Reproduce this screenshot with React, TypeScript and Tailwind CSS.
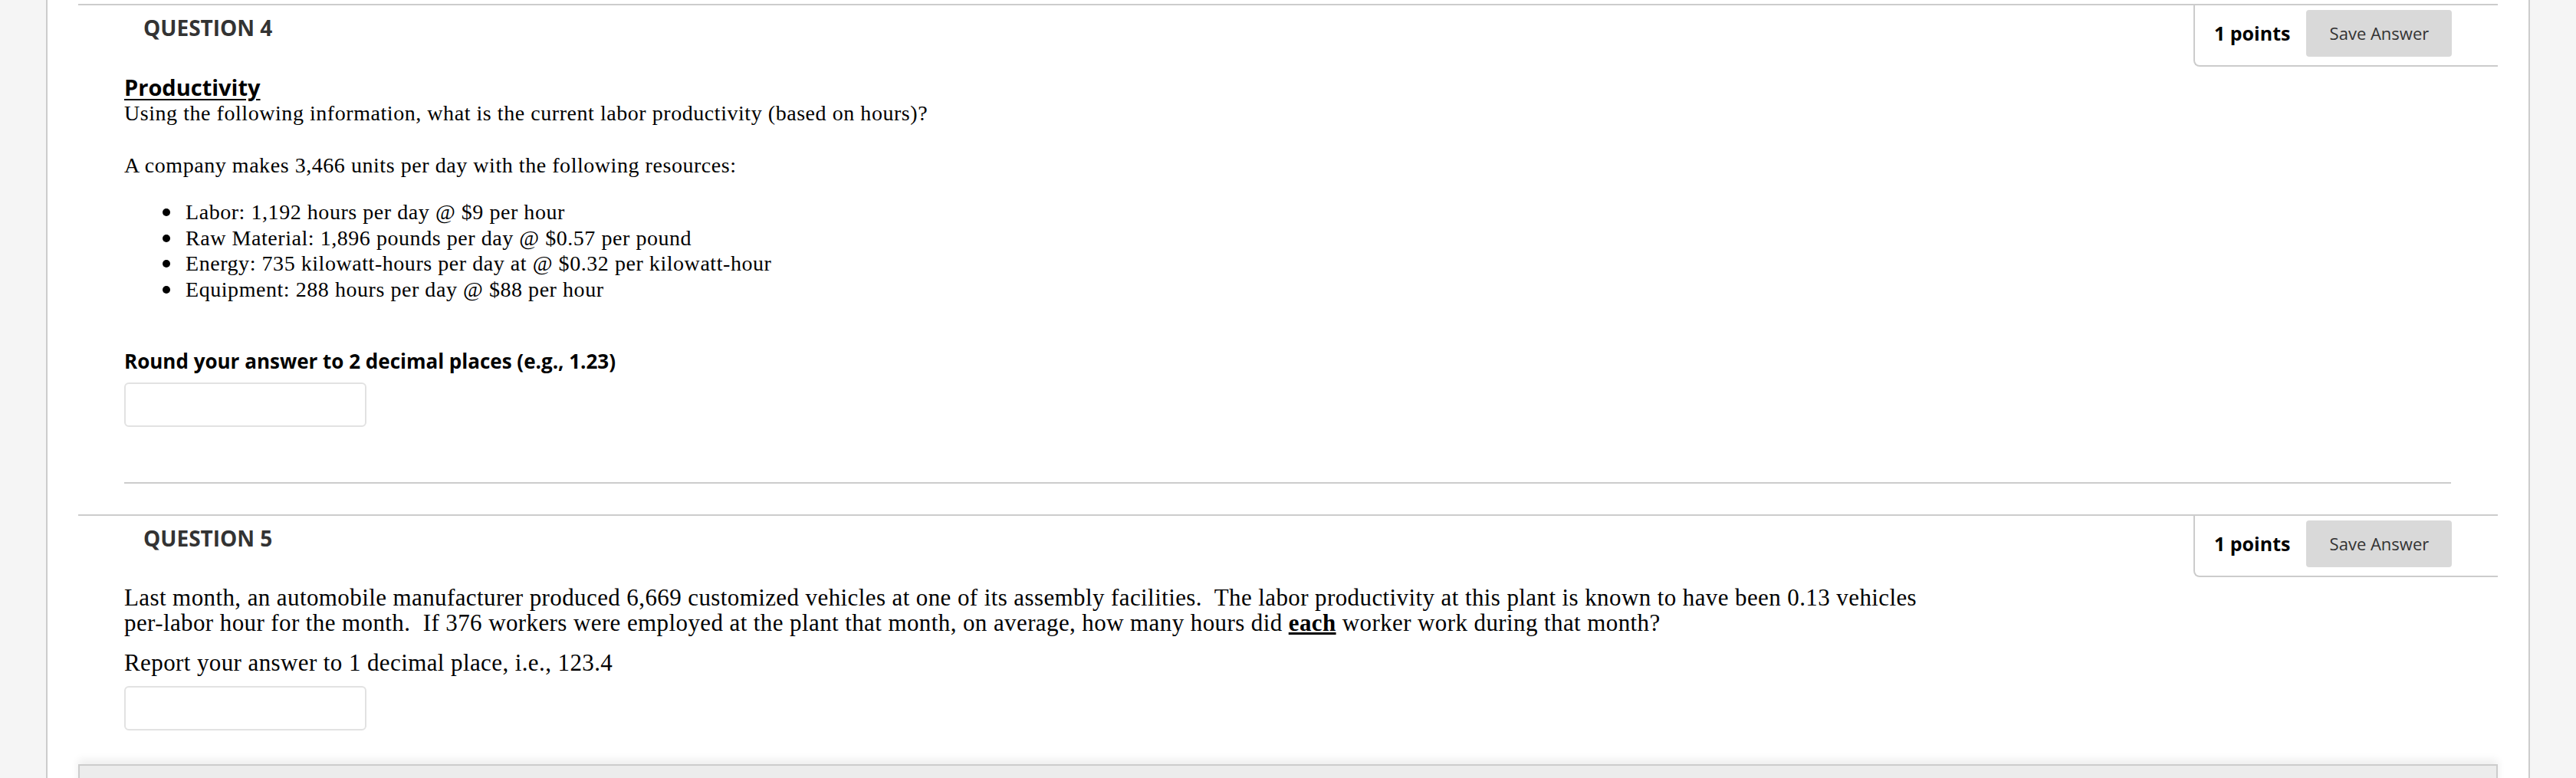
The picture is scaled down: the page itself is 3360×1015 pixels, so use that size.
import React from "react";

function QuestionHeader({ n }: { n: number }) {
  return (
    <div className="flex justify-between border-t-2 border-[#cccccc]">
      <div className="pl-[85px] pt-[10px] text-[28px] font-bold leading-[38px] text-[#333333]">
        QUESTION {n}
      </div>
      <div className="flex h-[80px] w-[397px] items-start rounded-bl-[8px] border-b-2 border-l-2 border-[#cccccc] pl-[25px] pt-[6px]">
        <span className="text-[25px] font-bold leading-[61px] text-black">1 points</span>
        <button className="ml-[21px] h-[61px] w-[190px] rounded-[4px] bg-[#d9d9d9] text-[22px] text-[#333333]">
          Save Answer
        </button>
      </div>
    </div>
  );
}

function AnswerBox({ className }: { className: string }) {
  return (
    <input
      type="text"
      className={
        "block h-[58px] w-[316px] rounded-[6px] border-2 border-[#e2e2e2] bg-white outline-none " +
        className
      }
    />
  );
}

const resources = [
  "Labor: 1,192 hours per day @ $9 per hour",
  "Raw Material: 1,896 pounds per day @ $0.57 per pound",
  "Energy: 735 kilowatt-hours per day at @ $0.32 per kilowatt-hour",
  "Equipment: 288 hours per day @ $88 per hour",
];

export default function App() {
  return (
    <div className="min-h-screen bg-[#f5f5f5] font-['Open_Sans',sans-serif]">
      <div className="mx-[60px] min-h-screen border-x-2 border-[#cccccc] bg-white px-[40px] pt-[5px]">
        {/* question 4 */}
        <QuestionHeader n={4} />
        <div className="pl-[60px] pr-[61px]">
          <div className="mt-[8px] text-[29px] font-bold leading-[38px] text-black underline underline-offset-[4px]">
            Productivity
          </div>
          <div className="font-['Liberation_Serif','Times_New_Roman',serif] text-[28px] tracking-[0.55px] text-black">
            <p className="leading-[30px]">
              Using the following information, what is the current labor productivity (based on hours)?
            </p>
            <p className="mt-[38px] leading-[30px]">
              A company makes 3,466 units per day with the following resources:
            </p>
            <ul className="mt-[29px] pl-[50px] leading-[33.5px]">
              {resources.map((r) => (
                <li key={r} className="flex">
                  <span className="mr-[20px] mt-[12px] h-[10px] w-[10px] shrink-0 rounded-full bg-black" />
                  <span>{r}</span>
                </li>
              ))}
            </ul>
          </div>
          <p className="mt-[61px] text-[26px] font-bold leading-[33px] text-black">
            Round your answer to 2 decimal places (e.g., 1.23)
          </p>
          <AnswerBox className="mt-[11px]" />
          <div className="mt-[72px] border-t-2 border-[#cccccc]" />
        </div>

        {/* question 5 */}
        <div className="mt-[40px]">
          <QuestionHeader n={5} />
          <div className="pl-[60px] pr-[61px] font-['Liberation_Serif','Times_New_Roman',serif] text-[31px] tracking-[0.4px] text-black">
            <p className="mt-[10px] leading-[33px]">
              Last month, an automobile manufacturer produced 6,669 customized vehicles at one of its assembly
              facilities.&nbsp; The labor productivity at this plant is known to have been 0.13 vehicles
              <br />
              per-labor hour for the month.&nbsp; If 376 workers were employed at the plant that month, on average,
              how many hours did <span className="font-bold underline">each</span> worker work during that month?
            </p>
            <p className="mt-[19px] leading-[33px]">Report your answer to 1 decimal place, i.e., 123.4</p>
            <AnswerBox className="mt-[14px]" />
          </div>
        </div>

        {/* submit bar */}
        <div className="mt-[44px] h-[60px] border-x-2 border-t-2 border-[#cccccc] bg-[#ececec] shadow-[0_-6px_10px_rgba(0,0,0,0.07)]" />
      </div>
    </div>
  );
}
